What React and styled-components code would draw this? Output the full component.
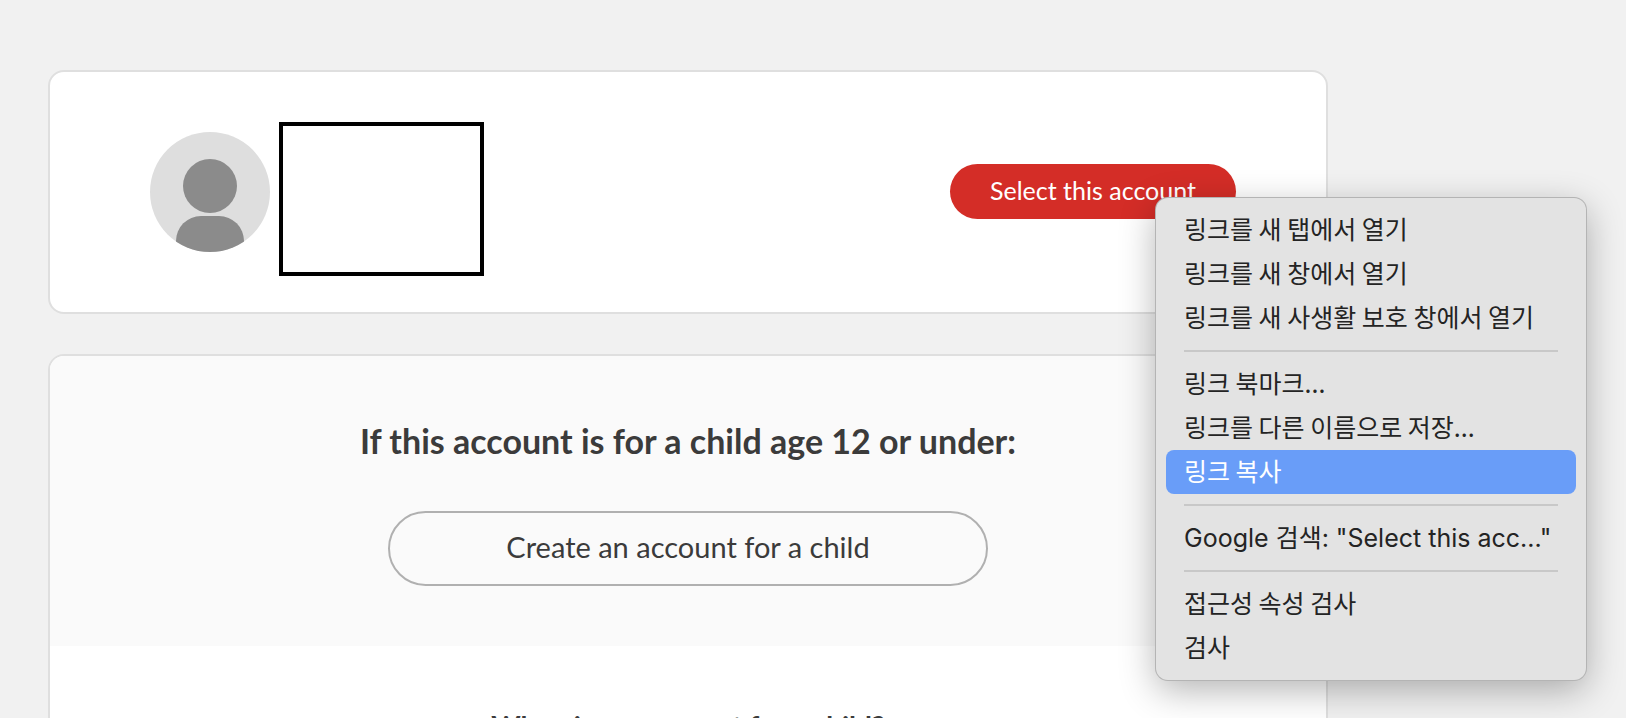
import React from 'react';
import styled, { createGlobalStyle } from 'styled-components';

const sans = '"Lato", "Liberation Sans", sans-serif';
const menuKorean = '"Noto Sans CJK KR", sans-serif';
const menuLatin = '"Inter", "Noto Sans CJK KR", sans-serif';

const GlobalStyle = createGlobalStyle`
  * { box-sizing: border-box; }
  body {
    margin: 0;
    background: #f1f1f1;
    color: #3b3b3b;
    font-family: ${sans};
  }
`;

const Page = styled.div`
  position: relative;
  height: 100vh;
  overflow: hidden;
`;

const Content = styled.main`
  display: flex;
  flex-direction: column;
  gap: 40px;
  max-width: 1328px;
  padding: 70px 0 0 48px;
`;

const Card = styled.section`
  background: #fff;
  border: 2px solid #dfdfdf;
  border-radius: 16px;
  overflow: hidden;
`;

const AccountRow = styled.div`
  display: flex;
  align-items: center;
  min-height: 240px;
  padding: 0 90px 0 100px;
`;

const Avatar = styled.svg`
  width: 120px;
  height: 120px;
  flex: none;
`;

const NameBox = styled.div`
  width: 205px;
  height: 154px;
  margin: 14px auto 0 9px;
  border: 4px solid #000;
`;

const SelectLink = styled.a`
  display: block;
  width: 286px;
  height: 55px;
  margin-bottom: 2px;
  border-radius: 28px;
  background: #d42d27;
  color: #fff;
  font-size: 25px;
  line-height: 53px;
  text-align: center;
  text-decoration: none;
`;

const Panel = styled.div`
  display: flex;
  flex-direction: column;
  align-items: center;
  padding: ${(p) => p.$pad};
  background: ${(p) => p.$bg};
`;

const Heading = styled.h2`
  margin: 0;
  font-size: ${(p) => (p.$small ? 28 : 34)}px;
  line-height: 40px;
  font-weight: 700;
`;

const CreateButton = styled.button`
  width: 600px;
  height: 75px;
  margin-top: 50px;
  padding: 0 0 4px;
  border: 2px solid #b0b0b0;
  border-radius: 38px;
  background: transparent;
  color: inherit;
  font: 400 29px ${sans};
`;

const Menu = styled.div`
  position: absolute;
  top: 198px;
  left: 1156px;
  width: 430px;
  padding: 10px;
  border-radius: 12px;
  background: #e3e3e3;
  box-shadow: 0 0 0 1px #b4b4b4, 0 10px 36px rgba(0, 0, 0, 0.3);
`;

const MenuItem = styled.button`
  display: block;
  width: 100%;
  height: 44px;
  padding: ${(p) => (p.$latin ? '0 18px' : '0 18px 4px')};
  border: 0;
  border-radius: 8px;
  background: ${(p) => (p.$active ? '#699df8' : 'transparent')};
  color: ${(p) => (p.$active ? '#fff' : '#242424')};
  font: 400 25px/40px ${(p) => (p.$latin ? menuLatin : menuKorean)};
  text-align: left;
  white-space: nowrap;
`;

const Divider = styled.hr`
  height: 2px;
  margin: 10px 18px;
  border: 0;
  background: #c8c8c8;
`;

const groups = [
  ['링크를 새 탭에서 열기', '링크를 새 창에서 열기', '링크를 새 사생활 보호 창에서 열기'],
  ['링크 북마크...', '링크를 다른 이름으로 저장...', '링크 복사'],
  ['Google 검색: "Select this acc..."'],
  ['접근성 속성 검사', '검사'],
];

export default function App() {
  return (
    <Page>
      <GlobalStyle />
      <Content>
        <Card>
          <AccountRow>
            <Avatar viewBox="0 0 120 120" role="img" aria-label="Profile">
              <defs>
                <clipPath id="disc"><circle cx="60" cy="60" r="60" /></clipPath>
              </defs>
              <g clipPath="url(#disc)">
                <rect width="120" height="120" fill="#dedede" />
                <circle cx="60" cy="54" r="27" fill="#8b8b8b" />
                <rect x="26" y="84" width="68" height="60" rx="25" fill="#8b8b8b" />
              </g>
            </Avatar>
            <NameBox />
            <SelectLink href="#select">Select this account</SelectLink>
          </AccountRow>
        </Card>
        <Card>
          <Panel $bg="#fafafa" $pad="65px 0 60px">
            <Heading>If this account is for a child age 12 or under:</Heading>
            <CreateButton type="button">Create an account for a child</CreateButton>
          </Panel>
          <Panel $bg="#fff" $pad="60px 0">
            <Heading $small>When is my account for a child?</Heading>
          </Panel>
        </Card>
      </Content>
      <Menu role="menu">
        {groups.map((items, i) => (
          <React.Fragment key={items[0]}>
            {i > 0 && <Divider />}
            {items.map((label) => (
              <MenuItem
                key={label}
                type="button"
                role="menuitem"
                $active={label === '링크 복사'}
                $latin={/[a-z]/i.test(label)}
              >
                {label}
              </MenuItem>
            ))}
          </React.Fragment>
        ))}
      </Menu>
    </Page>
  );
}
